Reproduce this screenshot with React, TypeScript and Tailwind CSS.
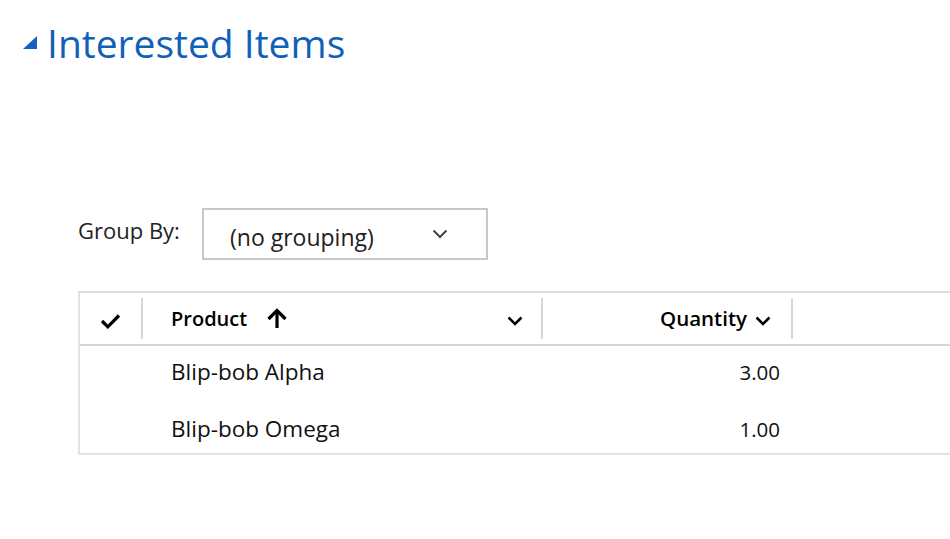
const rows = [
  { product: "Blip-bob Alpha", quantity: "3.00", h: "h-[57px]" },
  { product: "Blip-bob Omega", quantity: "1.00", h: "h-[50px]" },
];

function Check() {
  return (
    <svg width="21" height="16" viewBox="0 0 21 16" fill="none">
      <path d="M2 8 L7.8 13.8 L19 2.5" stroke="#000" strokeWidth="3.2" />
    </svg>
  );
}

function ArrowUp() {
  return (
    <svg width="20" height="20" viewBox="0 0 20 20" fill="none">
      <path d="M10 20 V3" stroke="#000" strokeWidth="3.2" />
      <path d="M1.5 11 L10 2.5 L18.5 11" stroke="#000" strokeWidth="3.2" />
    </svg>
  );
}

function Chevron({ color = "#000", w = 2.5 }: { color?: string; w?: number }) {
  return (
    <svg width="16" height="10" viewBox="0 0 16 10" fill="none">
      <path d="M1.5 1.5 L8 8 L14.5 1.5" stroke={color} strokeWidth={w} />
    </svg>
  );
}

export default function App() {
  return (
    <div className="w-[950px] h-[539px] bg-white overflow-hidden font-['Open_Sans',sans-serif] text-black">
      <div className="flex items-start pl-[23px] pt-[19px]">
        <svg width="14" height="13" viewBox="0 0 14 13" className="mt-[17px] shrink-0">
          <path d="M14 0 L14 13 L0 13 Z" fill="#1a5fc0" />
        </svg>
        <h1 className="ml-[10px] text-[39px] leading-[48px] text-[#1160b8]">Interested Items</h1>
      </div>

      <div className="mt-[141px] ml-[78px] flex items-start">
        <span className="w-[124px] shrink-0 text-[22px] leading-[28px] mt-[8px] text-[#222]">Group By:</span>
        <div className="w-[286px] h-[52px] border-2 border-[#c8c8c8] flex items-center pl-[26px] pr-[38px] justify-between">
          <span className="text-[23px] leading-[30px] text-[#222] mt-[6px]">(no grouping)</span>
          <Chevron color="#444" w={2} />
        </div>
      </div>

      <div className="mt-[31px] ml-[78px] w-[900px] border-t-2 border-b-2 border-l-2 border-[#e3e3e3] border-t-[#dcdcdc]">
        <div className="flex h-[53px] items-center border-b-2 border-[#d6d6d6]">
          <div className="w-[61px] flex justify-center pt-[4px]">
            <Check />
          </div>
          <div className="w-[2px] h-[41px] bg-[#d6d6d6]" />
          <div className="w-[398px] flex items-center pl-[28px] pr-[18px]">
            <span className="text-[20px] font-semibold">Product</span>
            <span className="ml-[20px] -mt-[2px]"><ArrowUp /></span>
            <span className="ml-auto mt-[4px]"><Chevron /></span>
          </div>
          <div className="w-[2px] h-[41px] bg-[#d6d6d6]" />
          <div className="w-[248px] flex items-center justify-end pr-[20px]">
            <span className="text-[20.5px] font-semibold">Quantity</span>
            <span className="ml-[8px] mt-[4px]"><Chevron /></span>
          </div>
          <div className="w-[2px] h-[41px] bg-[#d6d6d6]" />
        </div>
        {rows.map((r) => (
          <div key={r.product} className={`flex items-start pt-[12px] leading-[28px] text-[#111] ${r.h}`}>
            <div className="w-[63px]" />
            <div className="w-[400px] pl-[28px] text-[22.5px]">{r.product}</div>
            <div className="w-[237px] text-right text-[20.5px]">{r.quantity}</div>
          </div>
        ))}
      </div>
    </div>
  );
}
